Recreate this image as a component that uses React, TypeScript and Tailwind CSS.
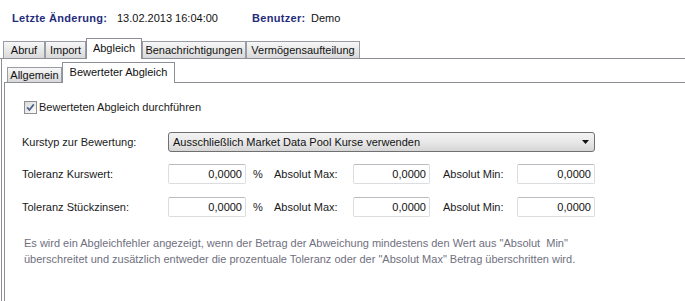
import React from "react";

type Tab = { label: string; width: string; active?: boolean };

const outerTabs: Tab[] = [
  { label: "Abruf", width: "w-[42px]" },
  { label: "Import", width: "w-[41px]" },
  { label: "Abgleich", width: "w-[56px]", active: true },
  { label: "Benachrichtigungen", width: "w-[104px]" },
  { label: "Vermögensaufteilung", width: "w-[114px]" },
];

const innerTabs: Tab[] = [
  { label: "Allgemein", width: "w-[55px]" },
  { label: "Bewerteter Abgleich", width: "w-[113px]", active: true },
];

const TabButton = ({ tab, inner }: { tab: Tab; inner?: boolean }) => {
  if (tab.active) {
    return (
      <div
        className={`${tab.width} relative z-10 -mb-px flex h-[21px] shrink-0 items-start justify-center border border-b-0 border-[#8c8e98] bg-white pt-[3px] text-[#111]`}
      >
        {tab.label}
      </div>
    );
  }
  return (
    <div
      className={`${tab.width} ${
        inner ? "h-[15px]" : "h-[17px]"
      } flex shrink-0 items-center justify-center whitespace-nowrap border border-b-0 border-[#9a9ca4] bg-gradient-to-b from-[#f7f7f7] to-[#d9d9d9] text-[#111]`}
    >
      {tab.label}
    </div>
  );
};

const Checkbox = () => (
  <svg width="13" height="13" viewBox="0 0 13 13" className="shrink-0">
    <defs>
      <linearGradient id="cb" x1="0" y1="0" x2="1" y2="1">
        <stop offset="0" stopColor="#d8d8d8" />
        <stop offset="1" stopColor="#ffffff" />
      </linearGradient>
    </defs>
    <rect x="0.5" y="0.5" width="12" height="12" fill="url(#cb)" stroke="#8e8f93" />
    <path
      d="M3.2 6.4 L5.4 9 L9.8 3.4"
      fill="none"
      stroke="#4c5f86"
      strokeWidth="1.7"
    />
  </svg>
);

const NumberField = ({ width }: { width: string }) => (
  <div
    className={`${width} flex h-[20px] shrink-0 items-center justify-end rounded-[2px] border border-[#dcdde0] border-t-[#b9bbc0] bg-white pr-[3px] text-[#111]`}
  >
    0,0000
  </div>
);

const ToleranceRow = ({ label }: { label: string }) => (
  <div className="flex h-[20px] items-center">
    <div className="w-[146px] shrink-0">{label}</div>
    <NumberField width="w-[78px]" />
    <div className="w-[28px] shrink-0 pl-[7px]">%</div>
    <div className="w-[79px] shrink-0">Absolut Max:</div>
    <NumberField width="w-[77px]" />
    <div className="w-[87px] shrink-0 pl-[13px]">Absolut Min:</div>
    <NumberField width="w-[78px]" />
  </div>
);

export default function App() {
  return (
    <div className="h-[301px] w-[685px] overflow-hidden bg-white font-['Liberation_Sans',Arial,sans-serif] text-[11px] leading-[13px] text-[#1a1a1a]">
      {/* Header */}
      <div className="flex h-[38px] pl-[12px] pt-[12px]">
        <div className="w-[105px] font-bold tracking-[0.3px] text-[#1f2d7c]">Letzte Änderung:</div>
        <div className="w-[135px] text-[#111]">13.02.2013 16:04:00</div>
        <div className="w-[59px] font-bold tracking-[0.3px] text-[#1f2d7c]">Benutzer:</div>
        <div className="text-[#111]">Demo</div>
      </div>

      {/* Outer tabs */}
      <div className="flex h-[21px] items-end border-b border-[#8c8e98] pl-[3px]">
        {outerTabs.map((t) => (
          <TabButton key={t.label} tab={t} />
        ))}
      </div>

      <div className="ml-[1px] h-[242px] border-l border-[#8c8e98]">
        <div className="ml-[2px] pt-[3px]">
          {/* Inner tabs */}
          <div className="flex h-[21px] items-end border-b border-[#8c8e98] pl-[3px]">
            {innerTabs.map((t) => (
              <TabButton key={t.label} tab={t} inner />
            ))}
          </div>

          <div className="h-[230px] border-l border-[#8c8e98] pl-[17px] pt-[18px]">
            <div className="ml-[2px] flex h-[13px] items-center gap-[2px]">
              <Checkbox />
              <span>Bewerteten Abgleich durchführen</span>
            </div>

            <div className="mt-[18px] flex h-[20px] items-center">
              <div className="w-[146px] shrink-0">Kurstyp zur Bewertung:</div>
              <div className="flex h-[20px] w-[427px] items-center justify-between rounded-[3px] border border-[#707070] bg-gradient-to-b from-[#f3f3f3] via-[#e8e8e8] to-[#d6d6d6] pl-[4px] pr-[5px] text-[#111]">
                <span>Ausschließlich Market Data Pool Kurse verwenden</span>
                <svg width="7" height="4" viewBox="0 0 7 4">
                  <path d="M0 0 H7 L3.5 4 Z" fill="#111" />
                </svg>
              </div>
            </div>

            <div className="mt-[12px]">
              <ToleranceRow label="Toleranz Kurswert:" />
            </div>
            <div className="mt-[13px]">
              <ToleranceRow label="Toleranz Stückzinsen:" />
            </div>

            <p className="ml-[2px] mt-[18px] leading-[16px] text-[#6f7080]">
              Es wird ein Abgleichfehler angezeigt, wenn der Betrag der Abweichung mindestens den Wert aus "Absolut&nbsp; Min"
              <br />
              überschreitet und zusätzlich entweder die prozentuale Toleranz oder der "Absolut Max" Betrag überschritten wird.
            </p>
          </div>
        </div>
      </div>
    </div>
  );
}
